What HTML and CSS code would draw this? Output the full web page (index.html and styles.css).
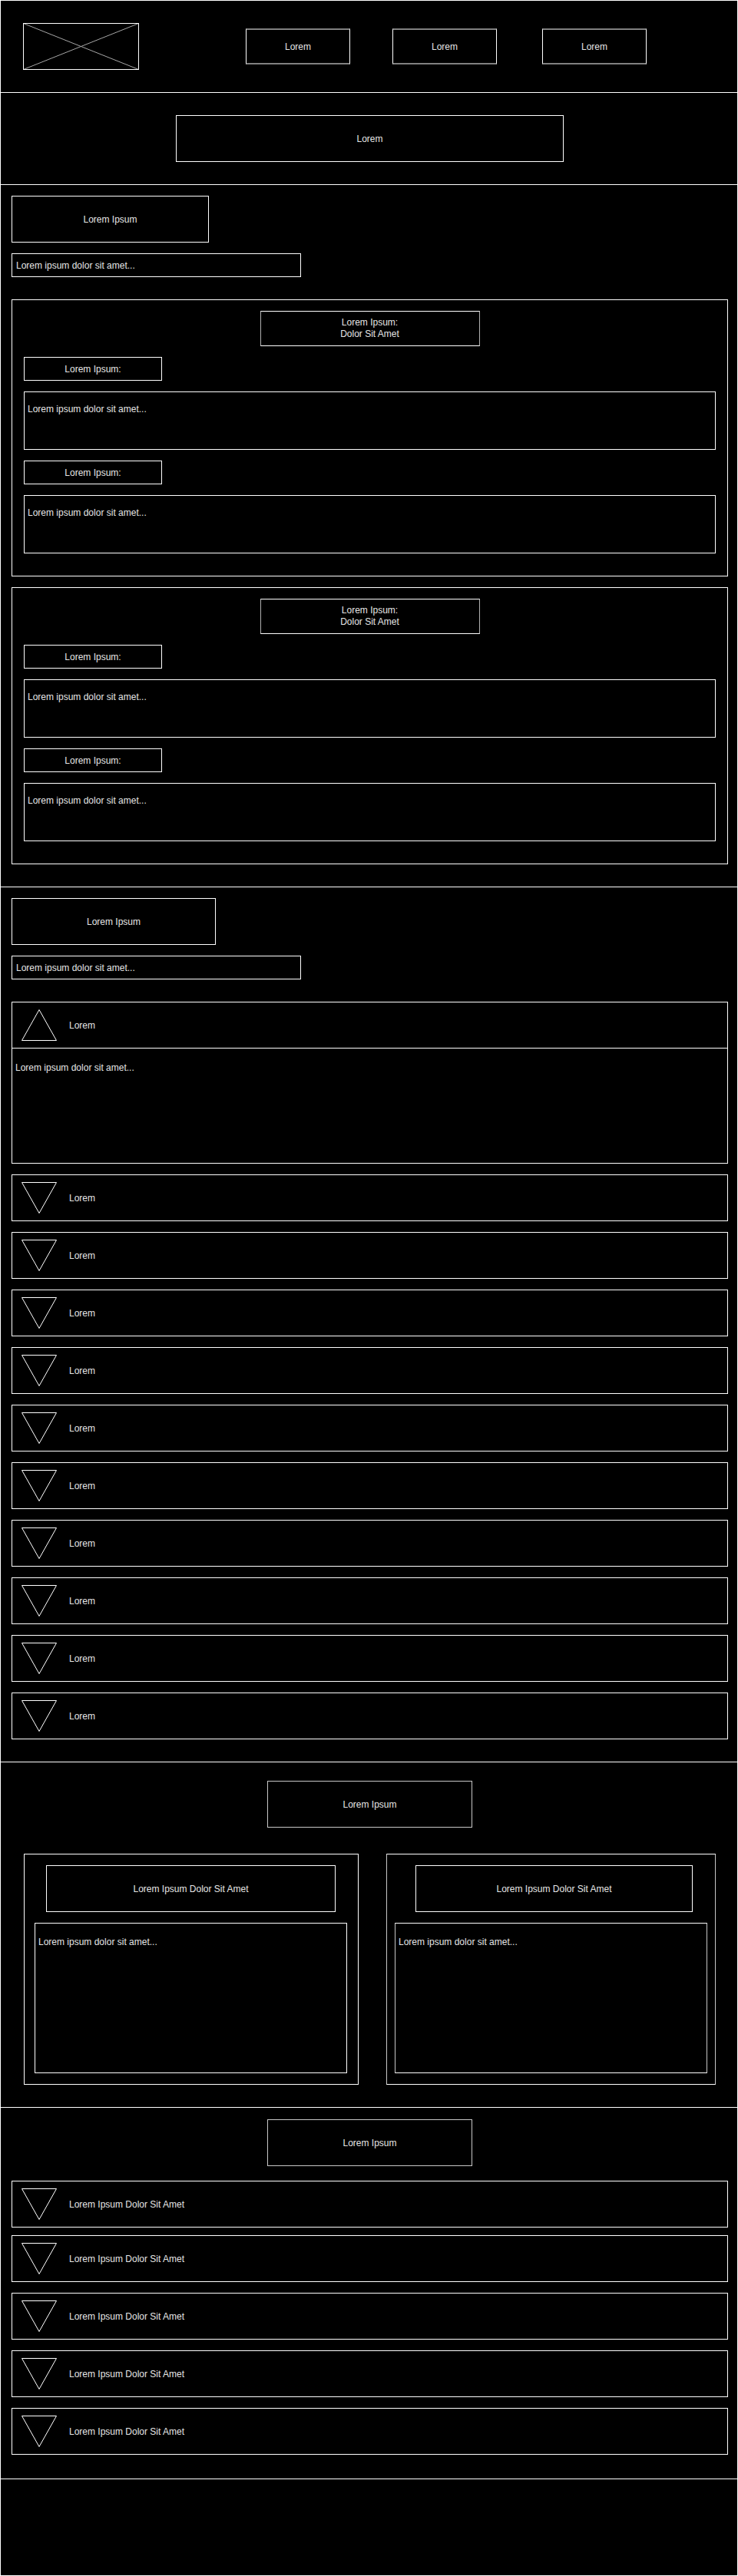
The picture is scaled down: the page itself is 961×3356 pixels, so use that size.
FILE: index.html
```html
<!DOCTYPE html>
<html lang="en">
<head>
<meta charset="utf-8">
<title>Wireframe</title>
<link rel="stylesheet" href="styles.css">
</head>
<body>
<div class="page">

  <header class="section topbar">
    <div class="logo">
      <svg width="151" height="61" viewBox="0 0 151 61">
        <line x1="0.5" y1="0.5" x2="150.5" y2="60.5" class="logo-cross"/>
        <line x1="150.5" y1="0.5" x2="0.5" y2="60.5" class="logo-cross"/>
        <rect x="0.5" y="0.5" width="150" height="60" class="logo-frame"/>
      </svg>
    </div>
    <nav class="nav">
      <a class="nav-btn">Lorem</a>
      <a class="nav-btn">Lorem</a>
      <a class="nav-btn">Lorem</a>
    </nav>
  </header>

  <section class="section hero">
    <div class="hero-btn">Lorem</div>
  </section>

  <section class="section block">
    <div class="box heading heading--a">Lorem Ipsum</div>
    <div class="box field">Lorem ipsum dolor sit amet...</div>

    <div class="box card">
      <div class="box card-title">Lorem Ipsum:<br>Dolor Sit Amet</div>
      <div class="box label">Lorem Ipsum:</div>
      <div class="box textarea">Lorem ipsum dolor sit amet...</div>
      <div class="box label">Lorem Ipsum:</div>
      <div class="box textarea">Lorem ipsum dolor sit amet...</div>
    </div>

    <div class="box card card--next">
      <div class="box card-title">Lorem Ipsum:<br>Dolor Sit Amet</div>
      <div class="box label">Lorem Ipsum:</div>
      <div class="box textarea">Lorem ipsum dolor sit amet...</div>
      <div class="box label">Lorem Ipsum:</div>
      <div class="box textarea">Lorem ipsum dolor sit amet...</div>
    </div>
  </section>

  <section class="section block">
    <div class="box heading heading--b">Lorem Ipsum</div>
    <div class="box field">Lorem ipsum dolor sit amet...</div>

    <div class="box acc acc--open">
      <div class="acc-head">
        <svg class="tri" width="46" height="41" viewBox="0 0 46 41"><polygon points="23,0.5 45.5,40.5 0.5,40.5"/></svg>
        <span class="acc-label">Lorem</span>
      </div>
      <div class="acc-body">Lorem ipsum dolor sit amet...</div>
    </div>
    <div class="box acc"><div class="acc-head"><svg class="tri" width="46" height="41" viewBox="0 0 46 41"><polygon points="0.5,0.5 45.5,0.5 23,40.5"/></svg><span class="acc-label">Lorem</span></div></div>
    <div class="box acc"><div class="acc-head"><svg class="tri" width="46" height="41" viewBox="0 0 46 41"><polygon points="0.5,0.5 45.5,0.5 23,40.5"/></svg><span class="acc-label">Lorem</span></div></div>
    <div class="box acc"><div class="acc-head"><svg class="tri" width="46" height="41" viewBox="0 0 46 41"><polygon points="0.5,0.5 45.5,0.5 23,40.5"/></svg><span class="acc-label">Lorem</span></div></div>
    <div class="box acc"><div class="acc-head"><svg class="tri" width="46" height="41" viewBox="0 0 46 41"><polygon points="0.5,0.5 45.5,0.5 23,40.5"/></svg><span class="acc-label">Lorem</span></div></div>
    <div class="box acc"><div class="acc-head"><svg class="tri" width="46" height="41" viewBox="0 0 46 41"><polygon points="0.5,0.5 45.5,0.5 23,40.5"/></svg><span class="acc-label">Lorem</span></div></div>
    <div class="box acc"><div class="acc-head"><svg class="tri" width="46" height="41" viewBox="0 0 46 41"><polygon points="0.5,0.5 45.5,0.5 23,40.5"/></svg><span class="acc-label">Lorem</span></div></div>
    <div class="box acc"><div class="acc-head"><svg class="tri" width="46" height="41" viewBox="0 0 46 41"><polygon points="0.5,0.5 45.5,0.5 23,40.5"/></svg><span class="acc-label">Lorem</span></div></div>
    <div class="box acc"><div class="acc-head"><svg class="tri" width="46" height="41" viewBox="0 0 46 41"><polygon points="0.5,0.5 45.5,0.5 23,40.5"/></svg><span class="acc-label">Lorem</span></div></div>
    <div class="box acc"><div class="acc-head"><svg class="tri" width="46" height="41" viewBox="0 0 46 41"><polygon points="0.5,0.5 45.5,0.5 23,40.5"/></svg><span class="acc-label">Lorem</span></div></div>
    <div class="box acc"><div class="acc-head"><svg class="tri" width="46" height="41" viewBox="0 0 46 41"><polygon points="0.5,0.5 45.5,0.5 23,40.5"/></svg><span class="acc-label">Lorem</span></div></div>
  </section>

  <section class="section split">
    <div class="box heading heading--center">Lorem Ipsum</div>
    <div class="pair">
      <div class="box panel panel--left">
        <div class="box panel-head">Lorem Ipsum Dolor Sit Amet</div>
        <div class="box panel-body">Lorem ipsum dolor sit amet...</div>
      </div>
      <div class="box panel panel--right">
        <div class="box panel-head">Lorem Ipsum Dolor Sit Amet</div>
        <div class="box panel-body">Lorem ipsum dolor sit amet...</div>
      </div>
    </div>
  </section>

  <section class="section faq">
    <div class="box heading heading--center">Lorem Ipsum</div>
    <div class="box acc faq-item"><div class="acc-head"><svg class="tri" width="46" height="41" viewBox="0 0 46 41"><polygon points="0.5,0.5 45.5,0.5 23,40.5"/></svg><span class="acc-label">Lorem Ipsum Dolor Sit Amet</span></div></div>
    <div class="box acc faq-item"><div class="acc-head"><svg class="tri" width="46" height="41" viewBox="0 0 46 41"><polygon points="0.5,0.5 45.5,0.5 23,40.5"/></svg><span class="acc-label">Lorem Ipsum Dolor Sit Amet</span></div></div>
    <div class="box acc faq-item"><div class="acc-head"><svg class="tri" width="46" height="41" viewBox="0 0 46 41"><polygon points="0.5,0.5 45.5,0.5 23,40.5"/></svg><span class="acc-label">Lorem Ipsum Dolor Sit Amet</span></div></div>
    <div class="box acc faq-item"><div class="acc-head"><svg class="tri" width="46" height="41" viewBox="0 0 46 41"><polygon points="0.5,0.5 45.5,0.5 23,40.5"/></svg><span class="acc-label">Lorem Ipsum Dolor Sit Amet</span></div></div>
    <div class="box acc faq-item"><div class="acc-head"><svg class="tri" width="46" height="41" viewBox="0 0 46 41"><polygon points="0.5,0.5 45.5,0.5 23,40.5"/></svg><span class="acc-label">Lorem Ipsum Dolor Sit Amet</span></div></div>
  </section>

  <footer class="section footer"></footer>

</div>
</body>
</html>
```

FILE: styles.css
```css
* {
  box-sizing: border-box;
}

html,
body {
  margin: 0;
  padding: 0;
  background: #000;
}

body {
  font-family: "Liberation Sans", Arial, sans-serif;
  font-size: 12px;
  color: #e6e6e6;
}

.page {
  width: 961px;
  min-height: 3356px;
  border: 1px solid #fff;
  display: flex;
  flex-direction: column;
}

.section {
  border-bottom: 1px solid #fff;
}

.box {
  border: 1px solid #fff;
}

/* ---------- top bar ---------- */
.topbar {
  height: 120px;
  display: flex;
  align-items: center;
  padding-left: 29px;
}

.logo {
  width: 151px;
  height: 61px;
  display: flex;
}

.logo-frame {
  fill: none;
  stroke: #fff;
  stroke-width: 1;
}

.logo-cross {
  stroke: #a6a6a6;
  stroke-width: 1;
}

.nav {
  display: flex;
  gap: 55px;
  margin-left: 139px;
}

.nav-btn {
  width: 136px;
  height: 47px;
  display: flex;
  align-items: center;
  justify-content: center;
  border-left: 1px solid #fff;
  border-right: 1px solid #fff;
  border-top: 2px solid #808080;
  border-bottom: 2px solid #808080;
}

.nav-btn:last-child {
  margin-left: 4px;
}

/* ---------- hero ---------- */
.hero {
  height: 120px;
  display: flex;
  align-items: center;
  justify-content: center;
  padding: 0 12px 0 14px;
}

.hero-btn {
  width: 505px;
  height: 61px;
  border: 1px solid #fff;
  display: flex;
  align-items: center;
  justify-content: center;
}

/* ---------- content blocks ---------- */
.block {
  display: flex;
  flex-direction: column;
  align-items: flex-start;
  padding: 14px 12px 29px 14px;
}

.heading {
  height: 61px;
  display: flex;
  align-items: center;
  justify-content: center;
}

.heading--a {
  width: 257px;
}

.heading--b {
  width: 266px;
}

.heading--center {
  width: 267px;
  align-self: center;
  border-color: #c8c8c8;
}

.field {
  width: 377px;
  height: 31px;
  margin-top: 14px;
  padding-left: 5px;
  display: flex;
  align-items: center;
}

.card {
  width: 933px;
  margin-top: 29px;
  padding: 14px 15px 29px 15px;
  display: flex;
  flex-direction: column;
  align-items: flex-start;
}

.card--next {
  margin-top: 14px;
}

.card-title {
  width: 286px;
  height: 46px;
  align-self: center;
  display: flex;
  align-items: center;
  justify-content: center;
  text-align: center;
  line-height: 15px;
  border-color: #fff #b0b0b0;
}

.label {
  width: 180px;
  height: 31px;
  margin-top: 14px;
  display: flex;
  align-items: center;
  justify-content: center;
}

.textarea {
  width: 100%;
  height: 76px;
  margin-top: 14px;
  padding: 15px 4px 0 4px;
}

/* ---------- accordion ---------- */
.acc {
  width: 933px;
  margin-top: 14px;
}

.acc--open {
  margin-top: 29px;
}

.acc-head {
  height: 59px;
  display: flex;
  align-items: center;
  padding-left: 12px;
}

.acc--open .acc-head {
  height: 60px;
  border-bottom: 1px solid #fff;
}

.tri {
  flex: none;
  display: block;
}

.tri polygon {
  fill: none;
  stroke: #fff;
  stroke-width: 1;
}

.acc-label {
  margin-left: 16px;
}

.acc-body {
  height: 149px;
  padding: 18px 4px 0 4px;
}

/* ---------- two panels ---------- */
.split {
  display: flex;
  flex-direction: column;
  align-items: flex-start;
  padding: 24px 12px 29px 14px;
}

.pair {
  display: flex;
  gap: 36px;
  margin-top: 34px;
  margin-left: 16px;
}

.panel {
  height: 301px;
  padding-top: 14px;
  display: flex;
  flex-direction: column;
  align-items: flex-start;
}

.panel--left {
  width: 436px;
}

.panel--right {
  width: 429px;
  border-color: #fff #c8c8c8 #fff #c8c8c8;
}

.panel-head {
  height: 61px;
  display: flex;
  align-items: center;
  justify-content: center;
}

.panel-body {
  width: 407px;
  height: 196px;
  margin-top: 14px;
  padding: 17px 4px 0 4px;
}

.panel--left .panel-head {
  width: 377px;
  margin-left: 28px;
}

.panel--left .panel-body {
  margin-left: 13px;
}

.panel--right .panel-head {
  width: 361px;
  margin-left: 37px;
}

.panel--right .panel-body {
  margin-left: 10px;
  border-color: #fff #c8c8c8;
}

/* ---------- faq list ---------- */
.faq {
  display: flex;
  flex-direction: column;
  align-items: flex-start;
  padding: 15px 12px 31px 14px;
}

.faq-item:nth-child(2) {
  margin-top: 19px;
}

.faq-item:nth-child(3) {
  margin-top: 10px;
}

/* ---------- footer ---------- */
.footer {
  flex: 1;
  border-bottom: 0;
}
```
